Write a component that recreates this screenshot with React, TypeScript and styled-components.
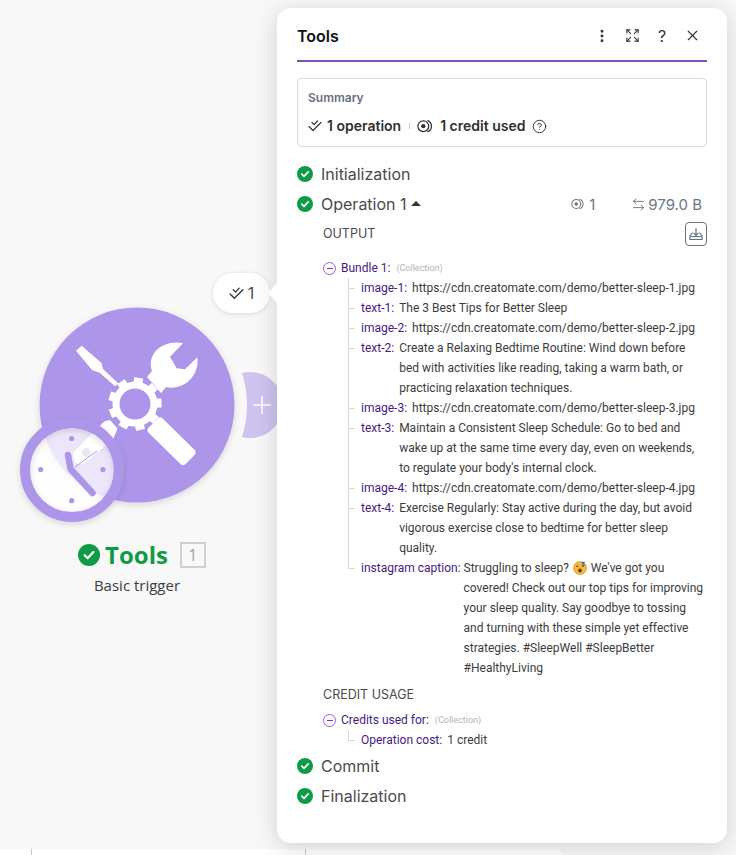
import React from "react";
import styled, { createGlobalStyle } from "styled-components";
import { EllipsisVertical, Expand, X, ArrowLeftRight, CircleHelp } from "lucide-react";

const GlobalStyle = createGlobalStyle`
  html, body {
    margin: 0;
    padding: 0;
    background: #f8f8f8;
    font-family: Inter, "Liberation Sans", sans-serif;
  }
`;

const Page = styled.div`
  position: relative;
  width: 736px;
  height: 855px;
  overflow: hidden;
  background: #f8f8f8;
`;

//bottom strip of the editor under the canvas
const BottomStrip = styled.div`
  position: absolute;
  left: 0;
  width: 563px;
  top: 849px;
  height: 6px;
  background: #fff;
  border-top-right-radius: 6px;
  display: flex;
`;

const StripCell = styled.div<{ $w: number }>`
  width: ${(p) => p.$w}px;
  height: 100%;
  border-right: 1px solid #c9c9c9;
`;

const NodeArt = styled.svg`
  position: absolute;
  left: 0;
  top: 300px;
`;

const NodeLabel = styled.div`
  position: absolute;
  left: 20px;
  top: 538px;
  width: 234px;
  display: flex;
  flex-direction: column;
  align-items: center;
  font-family: "Open Sans", sans-serif;
`;

const NodeTitleRow = styled.div`
  display: flex;
  align-items: center;
  gap: 5px;
  height: 34px;
  margin-left: 10px;
`;

const NodeTitle = styled.span`
  font-size: 24px;
  font-weight: 700;
  color: #0f9b46;
  line-height: 34px;
`;

const NodeIndex = styled.span`
  box-sizing: border-box;
  width: 26px;
  height: 26px;
  margin-left: 7px;
  border: 2px solid #cfcfcf;
  color: #a3a3a3;
  font-size: 16px;
  line-height: 22px;
  text-align: center;
`;

const NodeSub = styled.div`
  margin-top: 3px;
  font-size: 15px;
  line-height: 20px;
  color: #3d3d3d;
`;

const OpsPill = styled.div`
  position: absolute;
  left: 213px;
  top: 273px;
  width: 57px;
  height: 40px;
  box-sizing: border-box;
  border-radius: 20px;
  background: #fff;
  box-shadow: 0 1px 5px rgba(0, 0, 0, 0.12);
  display: flex;
  align-items: center;
  justify-content: center;
  gap: 4px;
  font-size: 16px;
  color: #4a4a4a;
`;

const Panel = styled.section`
  position: absolute;
  left: 277px;
  top: 8px;
  width: 450px;
  height: 835px;
  box-sizing: border-box;
  padding: 0 20px;
  background: #fff;
  border-radius: 14px;
  box-shadow: 0 4px 24px rgba(0, 0, 0, 0.16);

  &::before {
    content: "";
    position: absolute;
    left: -9px;
    top: 275px;
    border-style: solid;
    border-width: 10px 9px 10px 0;
    border-color: transparent #fff transparent transparent;
  }
`;

const PanelHeader = styled.header`
  height: 54px;
  box-sizing: border-box;
  border-bottom: 2px solid #7a52c0;
  display: flex;
  align-items: center;
  justify-content: space-between;
  padding-top: 3px;
`;

const PanelTitle = styled.h2`
  margin: 0;
  font-size: 16px;
  font-weight: 600;
  color: #111;
`;

const HeaderActions = styled.div`
  display: flex;
  align-items: center;
  gap: 12px;
  padding-right: 6px;
  color: #333;
`;

const IconSlot = styled.span`
  width: 18px;
  height: 18px;
  display: flex;
  align-items: center;
  justify-content: center;
  font-size: 16px;
  color: #333;
`;

const SummaryBox = styled.div`
  margin-top: 16px;
  height: 69px;
  box-sizing: border-box;
  border: 1px solid #dcdcdc;
  border-radius: 4px;
  padding: 11px 10px 0;
`;

const SummaryLabel = styled.div`
  font-size: 12px;
  font-weight: 600;
  line-height: 15px;
  color: #66707f;
`;

const SummaryRow = styled.div`
  margin-top: 11px;
  display: flex;
  align-items: center;
  gap: 5px;
  font-size: 14px;
  font-weight: 600;
  line-height: 20px;
  color: #2f2f2f;
`;

const SummaryDivider = styled.span`
  width: 1px;
  height: 6px;
  margin: 0 2px 0 3px;
  background: #c4c9d0;
`;

const HelpMark = styled.span`
  display: flex;
  margin-left: 2px;
`;

const StepRow = styled.div<{ $top?: number }>`
  margin-top: ${(p) => p.$top ?? 0}px;
  height: 30px;
  display: flex;
  align-items: center;
  gap: 8px;
  font-size: 16px;
  color: #4a4a4a;
`;

const StepStats = styled.div`
  margin-left: auto;
  padding-right: 5px;
  display: flex;
  align-items: center;
  font-size: 15px;
  color: #6b7683;
`;

const StatItem = styled.span<{ $gap?: number; $inner?: number }>`
  display: flex;
  align-items: center;
  gap: ${(p) => p.$inner ?? 3}px;
  margin-left: ${(p) => p.$gap ?? 0}px;
`;

const Caret = styled.span`
  width: 0;
  height: 0;
  margin-left: -4px;
  margin-top: -2px;
  border-style: solid;
  border-width: 0 5px 5px;
  border-color: transparent transparent #333;
`;

const StepBody = styled.div`
  padding-left: 26px;
`;

const SectionHead = styled.div<{ $top?: number }>`
  margin-top: ${(p) => p.$top ?? 0}px;
  display: flex;
  align-items: center;
  justify-content: space-between;
  font-size: 12.5px;
  line-height: 20px;
  color: #4a4a4a;
`;

const DownloadButton = styled.span`
  box-sizing: border-box;
  width: 22px;
  height: 24px;
  border: 1px solid #66707f;
  border-radius: 4px;
  display: flex;
  align-items: center;
  justify-content: center;
  margin-top: 1px;
`;

const CollectionRow = styled.div<{ $top: number }>`
  margin-top: ${(p) => p.$top}px;
  display: flex;
  align-items: center;
  height: 20px;
  font-family: Roboto, sans-serif;
  font-size: 12px;
`;

const Toggle = styled.span`
  box-sizing: border-box;
  width: 13px;
  height: 13px;
  margin-right: 5px;
  border: 1px solid #9a5be8;
  border-radius: 50%;
  position: relative;

  &::after {
    content: "";
    position: absolute;
    left: 2.5px;
    right: 2.5px;
    top: 5px;
    height: 1px;
    background: #7a3fd0;
  }
`;

const Key = styled.span`
  flex: none;
  color: #471a84;
`;

const CollectionTag = styled.span`
  margin-left: 6px;
  font-size: 9px;
  color: #b5b5b5;
`;

const TreeList = styled.ul`
  list-style: none;
  margin: 0 0 0 25px;
  padding: 0;
  font-family: Roboto, sans-serif;
  font-size: 12px;
  line-height: 20px;
`;

const TreeItem = styled.li<{ $gap?: number }>`
  position: relative;
  display: flex;
  gap: ${(p) => p.$gap ?? 5}px;
  padding-left: 13px;

  &::before {
    content: "";
    position: absolute;
    left: 0;
    top: 0;
    bottom: 0;
    border-left: 1px solid #d9d9d9;
  }

  &:last-child::before {
    bottom: auto;
    height: 10px;
  }

  &::after {
    content: "";
    position: absolute;
    left: 0;
    top: 10px;
    width: 7px;
    border-top: 1px solid #d9d9d9;
  }
`;

const Value = styled.span`
  color: #3c3c3c;
`;

const Emoji = styled.svg`
  vertical-align: -3px;
  margin: 0 1px;
`;

const CheckDot = () => (
  <svg width="16" height="16" viewBox="0 0 16 16">
    <circle cx="8" cy="8" r="8" fill="#0f9b46" />
    <path d="M4.8 8.2 7 10.3 11.2 5.9" fill="none" stroke="#fff" strokeWidth="1.7" strokeLinecap="round" strokeLinejoin="round" />
  </svg>
);

const DoubleCheck = ({ size = 14, color = "#333" }: { size?: number; color?: string }) => (
  <svg width={size} height={size} viewBox="0 0 14 14" fill="none" stroke={color} strokeWidth="1.2" strokeLinecap="round" strokeLinejoin="round">
    <path d="M1 7.5 5 11.5 13 3.5" />
    <path d="M4 3.5 6.2 5.7 9.5 2" />
  </svg>
);

const CreditIcon = ({ size = 16, color = "#333" }: { size?: number; color?: string }) => (
  <svg width={size} height={size * 0.8} viewBox="0 0 20 16" fill="none" stroke={color} strokeWidth="1.4">
    <circle cx="7" cy="8" r="6" />
    <circle cx="7" cy="8" r="2.4" fill={color} stroke="none" />
    <path d="M11.5 1.6a6.8 6.8 0 0 1 0 12.8" />
  </svg>
);

const gearTeeth = [0, 40, 80, 120, 160, 200, 240, 280, 320];

const NodeDrawing = () => (
  <NodeArt width="280" height="240" viewBox="0 300 280 240">
    <defs>
      <filter id="soft" x="-20%" y="-20%" width="140%" height="140%">
        <feDropShadow dx="0" dy="2" stdDeviation="3" floodColor="#000" floodOpacity="0.14" />
      </filter>
    </defs>
    {/* add-module half circle */}
    <path d="M242 373 A33 33 0 1 1 242 437 A107 107 0 0 0 242 373 Z" fill="#cfc3f0" />
    <path d="M262 396v18M253 405h18" stroke="#fff" strokeWidth="1.6" />
    <circle cx="137" cy="405" r="97.5" fill="#ad96e9" filter="url(#soft)" />

    {/* screwdriver */}
    <path d="M76 350.7 81.7 345.7 101.5 363 103 369 120 385 117 388 100 373 92 370Z" fill="#fff" />
    <path d="M104 421.5 110 420 117.5 428.5 113.5 438.5 86 462 C80 468 70 462 74 452Z" fill="#fff" />
    <circle cx="86.5" cy="452.5" r="4.5" fill="#ad96e9" />

    {/* wrench */}
    <path d="M147 377 152 371 C146 352 165 339 183 343.3 L170 356.7 176.7 368.3 185 369.3 197.3 357.3 C200 376 183 391 166 387 L161 393Z" fill="#fff" />
    <rect x="0" y="-10" width="52" height="20" rx="4" fill="#fff" transform="translate(153 423) rotate(44.5)" />

    {/* gear */}
    <circle cx="135" cy="404" r="26.5" fill="#ad96e9" />
    {gearTeeth.map((a) => (
      <rect key={a} x="130.5" y="377.5" width="9" height="7.5" fill="#fff" transform={`rotate(${a + 8} 135 404)`} />
    ))}
    <circle cx="135" cy="404" r="19" fill="none" stroke="#fff" strokeWidth="7" />

    {/* clock */}
    <circle cx="72" cy="470" r="42" fill="rgba(255,255,255,0.76)" />
    <circle cx="72" cy="470" r="47" fill="none" stroke="#ad96e9" strokeWidth="10" filter="url(#soft)" />
    <circle cx="71.7" cy="438.5" r="2.6" fill="#ad96e9" />
    <circle cx="40.7" cy="469.5" r="2.6" fill="#ad96e9" />
    <circle cx="103" cy="469.5" r="2.6" fill="#ad96e9" />
    <circle cx="71.7" cy="500.7" r="2.6" fill="#ad96e9" />
    <path d="M68 455 70.5 469 92.5 493" fill="none" stroke="#ad96e9" strokeWidth="6.5" strokeLinecap="round" strokeLinejoin="round" />
    <path d="M75 467 97 451" stroke="#ad96e9" strokeWidth="1" />
  </NodeArt>
);

const items: { k: string; v: string }[] = [
  { k: "image-1:", v: "https://cdn.creatomate.com/demo/better-sleep-1.jpg" },
  { k: "text-1:", v: "The 3 Best Tips for Better Sleep" },
  { k: "image-2:", v: "https://cdn.creatomate.com/demo/better-sleep-2.jpg" },
  { k: "text-2:", v: "Create a Relaxing Bedtime Routine: Wind down before bed with activities like reading, taking a warm bath, or practicing relaxation techniques." },
  { k: "image-3:", v: "https://cdn.creatomate.com/demo/better-sleep-3.jpg" },
  { k: "text-3:", v: "Maintain a Consistent Sleep Schedule: Go to bed and wake up at the same time every day, even on weekends, to regulate your body's internal clock." },
  { k: "image-4:", v: "https://cdn.creatomate.com/demo/better-sleep-4.jpg" },
  { k: "text-4:", v: "Exercise Regularly: Stay active during the day, but avoid vigorous exercise close to bedtime for better sleep quality." },
];

const SleepyFace = () => (
  <Emoji width="14" height="14" viewBox="0 0 14 14">
    <circle cx="7" cy="7" r="6.6" fill="#f5b83d" stroke="#c98a1e" strokeWidth="0.5" />
    <path d="M3 5.2h2.2M8.8 5.2H11" stroke="#5a3a10" strokeWidth="0.9" />
    <ellipse cx="7" cy="9.6" rx="1.7" ry="2" fill="#5a3a10" />
    <path d="M8.5 1.5h3L9 4h3" fill="none" stroke="#2b5bd7" strokeWidth="1" />
  </Emoji>
);

const App = () => {
  return (
    <Page>
      <GlobalStyle />
      <BottomStrip>
        <StripCell $w={31} />
        <StripCell $w={273} />
      </BottomStrip>

      <NodeDrawing />
      <OpsPill>
        <DoubleCheck size={15} color="#333" />1
      </OpsPill>
      <NodeLabel>
        <NodeTitleRow>
          <svg width="22" height="22" viewBox="0 0 16 16">
            <circle cx="8" cy="8" r="8" fill="#0f9b46" />
            <path d="M4.8 8.2 7 10.3 11.2 5.9" fill="none" stroke="#fff" strokeWidth="1.6" strokeLinecap="round" strokeLinejoin="round" />
          </svg>
          <NodeTitle>Tools</NodeTitle>
          <NodeIndex>1</NodeIndex>
        </NodeTitleRow>
        <NodeSub>Basic trigger</NodeSub>
      </NodeLabel>

      <Panel>
        <PanelHeader>
          <PanelTitle>Tools</PanelTitle>
          <HeaderActions>
            <IconSlot>
              <EllipsisVertical size={16} strokeWidth={2.4} />
            </IconSlot>
            <IconSlot>
              <Expand size={15} strokeWidth={1.7} />
            </IconSlot>
            <IconSlot>?</IconSlot>
            <IconSlot>
              <X size={17} strokeWidth={1.6} />
            </IconSlot>
          </HeaderActions>
        </PanelHeader>

        <SummaryBox>
          <SummaryLabel>Summary</SummaryLabel>
          <SummaryRow>
            <DoubleCheck size={14} />
            1 operation
            <SummaryDivider />
            <CreditIcon size={18} />
            1 credit used
            <HelpMark>
              <CircleHelp size={15} strokeWidth={1.5} />
            </HelpMark>
          </SummaryRow>
        </SummaryBox>

        <StepRow $top={12}>
          <CheckDot />
          Initialization
        </StepRow>
        <StepRow>
          <CheckDot />
          Operation 1
          <Caret />
          <StepStats>
            <StatItem>
              <CreditIcon size={15} color="#6b7683" />1
            </StatItem>
            <StatItem $gap={36} $inner={2}>
              <ArrowLeftRight size={15} strokeWidth={1.5} />
              979.0 B
            </StatItem>
          </StepStats>
        </StepRow>

        <StepBody>
          <SectionHead $top={2}>
            OUTPUT
            <DownloadButton>
              <svg width="14" height="14" viewBox="0 0 14 14" fill="none" stroke="#66707f" strokeWidth="1.2">
                <path d="M7 1v7M4.5 5.8 7 8.3l2.5-2.5" />
                <path d="M3.5 5.5 1 9v3.5h12V9L10.5 5.5M1 9.5h12" />
              </svg>
            </DownloadButton>
          </SectionHead>
          <CollectionRow $top={12}>
            <Toggle />
            <Key>Bundle 1:</Key>
            <CollectionTag>(Collection)</CollectionTag>
          </CollectionRow>
          <TreeList>
            {items.map((it) => (
              <TreeItem key={it.k}>
                <Key>{it.k}</Key>
                <Value>{it.v}</Value>
              </TreeItem>
            ))}
            <TreeItem $gap={3}>
              <Key>instagram caption:</Key>
              <Value>
                Struggling to sleep? <SleepyFace /> We've got you covered! Check out our top tips for improving your sleep quality. Say goodbye to tossing and turning with these simple yet effective strategies. #SleepWell #SleepBetter #HealthyLiving
              </Value>
            </TreeItem>
          </TreeList>

          <SectionHead $top={7}>CREDIT USAGE</SectionHead>
          <CollectionRow $top={5}>
            <Toggle />
            <Key>Credits used for:</Key>
            <CollectionTag>(Collection)</CollectionTag>
          </CollectionRow>
          <TreeList>
            <TreeItem>
              <Key>Operation cost:</Key>
              <Value>1 credit</Value>
            </TreeItem>
          </TreeList>
        </StepBody>

        <StepRow $top={1}>
          <CheckDot />
          Commit
        </StepRow>
        <StepRow>
          <CheckDot />
          Finalization
        </StepRow>
      </Panel>
    </Page>
  );
};

export default App;
